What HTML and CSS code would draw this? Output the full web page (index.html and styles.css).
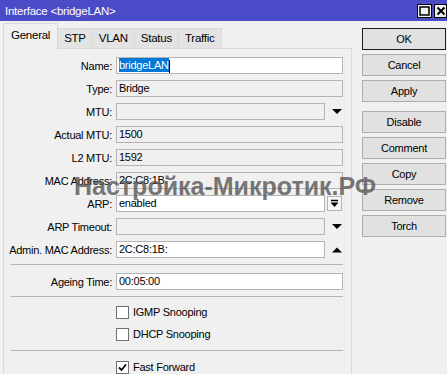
FILE: index.html
```html
<!DOCTYPE html>
<html lang="en">
<head>
  <meta charset="UTF-8">
  <title>Interface &lt;bridgeLAN&gt;</title>
  <link rel="stylesheet" href="styles.css">
</head>
<body>
  <div class="window">
    <div class="titlebar">
      <span class="title">Interface &lt;bridgeLAN&gt;</span>
      <div class="title-btns">
        <span class="tbtn"><svg width="11" height="10" viewBox="0 0 11 10"><rect x="1" y="1" width="9" height="8" fill="none" stroke="#000" stroke-width="1.5"/></svg></span>
        <span class="tbtn"><svg width="10" height="10" viewBox="0 0 10 10"><path d="M1.5 1.5L8.5 8.5M8.5 1.5L1.5 8.5" stroke="#000" stroke-width="2"/></svg></span>
      </div>
    </div>

    <div class="main">
      <div class="left">
        <!-- tabs -->
        <div class="tabs">
          <div class="tab active">General</div>
          <div class="tab">STP</div>
          <div class="tab">VLAN</div>
          <div class="tab">Status</div>
          <div class="tab">Traffic</div>
        </div>

        <div class="panel">
          <div class="row">
            <label>Name:</label>
            <div class="field edit"><span class="sel">bridgeLAN</span><span class="caret"></span></div>
          </div>
          <div class="row">
            <label>Type:</label>
            <div class="field">Bridge</div>
          </div>
          <div class="row">
            <label>MTU:</label>
            <div class="field"></div>
            <div class="arrow"><svg width="10" height="6" viewBox="0 0 10 6"><path d="M0 0H10L5 5Z" fill="#000"/></svg></div>
          </div>
          <div class="row">
            <label>Actual MTU:</label>
            <div class="field">1500</div>
          </div>
          <div class="row">
            <label>L2 MTU:</label>
            <div class="field">1592</div>
          </div>
          <div class="row">
            <label>MAC Address:</label>
            <div class="field">2C:C8:1B:</div>
          </div>
          <div class="row">
            <label>ARP:</label>
            <div class="field edit">enabled</div>
            <div class="arrow"><span class="dd-btn"><svg width="9" height="9" viewBox="0 0 9 9"><path d="M1 1.5H8" stroke="#000" stroke-width="1.5"/><path d="M0.5 3.5H8.5L4.5 8Z" fill="#000"/></svg></span></div>
          </div>
          <div class="row">
            <label>ARP Timeout:</label>
            <div class="field"></div>
            <div class="arrow"><svg width="10" height="6" viewBox="0 0 10 6"><path d="M0 0H10L5 5Z" fill="#000"/></svg></div>
          </div>
          <div class="row">
            <label>Admin. MAC Address:</label>
            <div class="field edit">2C:C8:1B:</div>
            <div class="arrow"><svg width="10" height="6" viewBox="0 0 10 6"><path d="M0 5.5H10L5 0.5Z" fill="#000"/></svg></div>
          </div>

          <div class="sep"></div>

          <div class="row">
            <label>Ageing Time:</label>
            <div class="field edit">00:05:00</div>
          </div>

          <div class="sep tight"></div>

          <div class="check-row"><span class="box"></span>IGMP Snooping</div>
          <div class="check-row"><span class="box"></span>DHCP Snooping</div>

          <div class="sep"></div>

          <div class="check-row"><span class="box"><svg width="11" height="11" viewBox="0 0 11 11"><path d="M2 5.5L4.5 8L9 2.5" fill="none" stroke="#000" stroke-width="1.8"/></svg></span>Fast Forward</div>
        </div>
      </div>

      <div class="buttons">
        <button class="btn default">OK</button>
        <button class="btn">Cancel</button>
        <button class="btn">Apply</button>
        <button class="btn group">Disable</button>
        <button class="btn">Comment</button>
        <button class="btn">Copy</button>
        <button class="btn">Remove</button>
        <button class="btn">Torch</button>
      </div>
    </div>

    <div class="watermark">Настройка-Микротик.РФ</div>
  </div>
</body>
</html>
```

FILE: styles.css
```css
* {
  margin: 0;
  padding: 0;
  box-sizing: border-box;
}
body {
  font-family: 'Liberation Sans', Arial, sans-serif;
  font-size: 11px;
  letter-spacing: -0.25px;
  color: #000;
  background-color: #f0f0f0;
  width: 447px;
  height: 374px;
  overflow: hidden;
}
.window {
  position: relative;
  height: 374px;
}
.titlebar {
  height: 21px;
  background-color: #4b4bc8;
  display: flex;
  align-items: center;
  justify-content: space-between;
  padding-left: 5px;
}
.title {
  color: #fff;
  font-size: 11.5px;
}
.title-btns {
  display: flex;
  gap: 2px;
  align-self: flex-start;
  margin-top: 4px;
}
.tbtn {
  width: 15px;
  height: 14px;
  background-color: #f0f0f0;
  border: 1px solid #000;
  display: flex;
  align-items: center;
  justify-content: center;
}
.tbtn:last-child {
  width: 13px;
}
.main {
  display: flex;
  padding-top: 2px;
}
.left {
  margin-left: 3px;
  width: 349px;
}
/* tabs */
.tabs {
  display: flex;
  align-items: flex-end;
  height: 25px;
  padding-left: 1px;
}
.tab {
  height: 20px;
  padding: 0 6px;
  line-height: 19px;
  font-size: 11.5px;
  background-color: #e3e3e3;
  border: 1px solid #d9d9d9;
  border-bottom: none;
  margin-left: -1px;
}
.tab.active {
  height: 26px;
  line-height: 22px;
  background-color: #f0f0f0;
  padding: 0 7px;
  position: relative;
  z-index: 1;
  margin-bottom: -1px;
}
.panel {
  border: 1px solid #d9d9d9;
  border-bottom: none;
  height: 330px;
  padding: 8px 8px 0 0;
}
.row {
  display: flex;
  align-items: center;
  height: 17px;
  margin-bottom: 6px;
}
.row label {
  width: 108px;
  margin-right: 4px;
  text-align: right;
  flex-shrink: 0;
  white-space: nowrap;
}
.field {
  flex: 1;
  height: 17px;
  border: 1px solid #b4b4b4;
  padding-left: 2px;
  line-height: 15px;
  white-space: nowrap;
  overflow: hidden;
}
.field.edit {
  background-color: #fff;
}
.sel {
  background-color: #0078d7;
  color: #fff;
  padding: 1px 0;
}
.caret {
  display: inline-block;
  width: 1px;
  height: 13px;
  background-color: #000;
  vertical-align: middle;
}
.arrow {
  width: 18px;
  display: flex;
  justify-content: flex-end;
  align-items: center;
  padding-right: 1px;
}
.dd-btn {
  width: 15px;
  height: 15px;
  border: 1px solid #b4b4b4;
  background-color: #f7f7f7;
  display: flex;
  align-items: center;
  justify-content: center;
}
.sep {
  height: 1px;
  background-color: #b4b4b4;
  margin: 0 0 8px 7px;
}
.sep.tight {
  margin-bottom: 4px;
}
.check-row {
  display: flex;
  align-items: center;
  height: 22px;
  padding-left: 112px;
}
.check-row + .sep {
  margin-top: 5px;
  margin-bottom: 5px;
}
.box {
  width: 13px;
  height: 13px;
  border: 1px solid #707070;
  background-color: #fff;
  margin-right: 4px;
  display: flex;
  align-items: center;
  justify-content: center;
}
/* right buttons */
.buttons {
  margin-left: 10px;
  width: 84px;
  padding-top: 5px;
  display: flex;
  flex-direction: column;
  gap: 4px;
}
.btn {
  height: 22px;
  font-family: inherit;
  font-size: 11px;
  letter-spacing: -0.25px;
  background-color: #e1e1e1;
  border: 1px solid #adadad;
  color: #000;
}
.btn.default {
  border-color: #1a1a1a;
}
.btn.group {
  margin-top: 5px;
}
.watermark {
  position: absolute;
  left: 74px;
  top: 174px;
  font-size: 25px;
  line-height: 25px;
  letter-spacing: 0;
  font-weight: bold;
  color: rgba(85, 85, 85, 0.8);
  white-space: nowrap;
}
```
